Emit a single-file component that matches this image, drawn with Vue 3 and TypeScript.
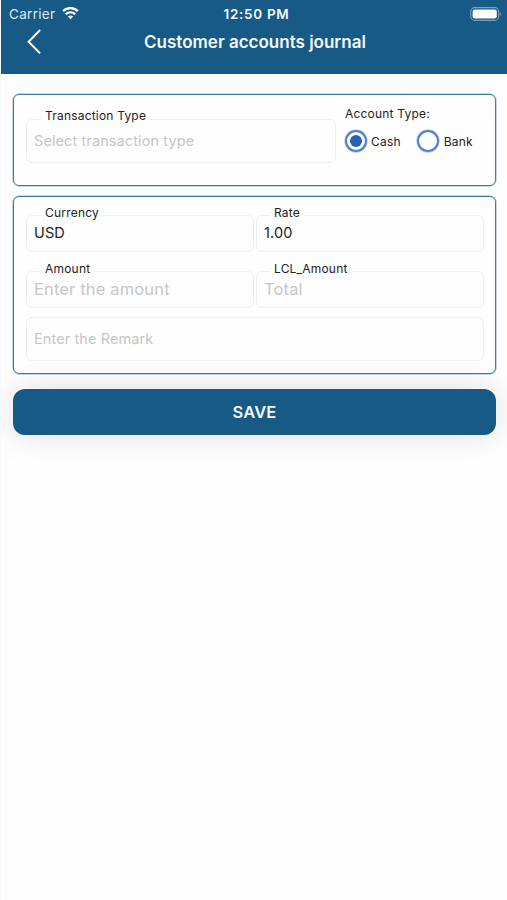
<script setup lang="ts">
import { ref } from 'vue'

type AccountType = 'Cash' | 'Bank'

const accountTypes: AccountType[] = ['Cash', 'Bank']
const accountType = ref<AccountType>('Cash')
const transactionType = ref('')
const currency = ref('USD')
const rate = ref('1.00')
const amount = ref('')
const total = ref('')
const remark = ref('')
</script>

<template>
  <div class="screen">
    <header class="header">
      <div class="status">
        <div class="carrier">
          <span>Carrier</span>
          <svg class="wifi" viewBox="0 0 17 13" width="17" height="13" fill="none" stroke="#fff">
            <path d="M1.1 4.1C5.3.1 11.7.1 15.9 4.1" stroke-width="2.4" />
            <path d="M3.7 7.2C6.5 4.7 10.5 4.7 13.3 7.2" stroke-width="2.2" />
            <path d="M8.5 12.2 5.9 9.5C7.5 8.2 9.5 8.2 11.1 9.5Z" fill="#fff" stroke="none" />
          </svg>
        </div>
        <span class="time">12:50 PM</span>
        <svg class="battery" viewBox="0 0 32 14" width="32" height="14">
          <rect x="0.8" y="0.6" width="27.8" height="12.8" rx="4" fill="none" stroke="#7ba2c0" stroke-width="1.1" />
          <rect x="2.6" y="2.4" width="24.2" height="9.2" rx="2.4" fill="#fff" />
          <path d="M29.9 4.9C31.4 5.6 31.4 8.4 29.9 9.1Z" fill="#7ba2c0" />
        </svg>
      </div>
      <div class="nav">
        <button class="back" type="button" aria-label="Back">
          <svg viewBox="0 0 16 26" width="16" height="26" fill="none" stroke="#fff" stroke-width="2">
            <path d="M14.1 1 2.6 12.7 14.1 24.4" />
          </svg>
        </button>
        <h1 class="title">Customer accounts journal</h1>
      </div>
    </header>

    <main class="form">
      <section class="card type-card">
        <div class="field type-field">
          <label for="type">Transaction Type</label>
          <input id="type" v-model="transactionType" placeholder="Select transaction type" />
        </div>
        <div class="account">
          <div class="account-title">Account Type:</div>
          <div class="options">
            <div v-for="t in accountTypes" :key="t" class="option" @click="accountType = t">
              <span class="radio"><span v-if="accountType === t" class="dot"></span></span>
              <span>{{ t }}</span>
            </div>
          </div>
        </div>
      </section>

      <section class="card amounts-card">
        <div class="row">
          <div class="field">
            <label for="currency">Currency</label>
            <input id="currency" v-model="currency" />
          </div>
          <div class="field">
            <label for="rate">Rate</label>
            <input id="rate" v-model="rate" />
          </div>
        </div>
        <div class="row">
          <div class="field">
            <label for="amount">Amount</label>
            <input id="amount" v-model="amount" class="big" placeholder="Enter the amount" />
          </div>
          <div class="field">
            <label for="total">LCL_Amount</label>
            <input id="total" v-model="total" class="big" placeholder="Total" />
          </div>
        </div>
        <div class="field remark">
          <input v-model="remark" placeholder="Enter the Remark" />
        </div>
      </section>

      <button class="save" type="button">SAVE</button>
    </main>
  </div>
</template>

<style>
body {
  margin: 0;
  background: #fefefe;
}
</style>

<style scoped>
.screen {
  box-sizing: border-box;
  width: 507px;
  height: 900px;
  overflow: hidden;
  border-left: 1px solid #f7f8f9;
  background: #fefefe;
  color: #222;
  font-family: Inter, "Liberation Sans", sans-serif;
}
.header {
  box-sizing: border-box;
  height: 74px;
  margin-left: -1px;
  border-left: 1px solid #8fb0c8;
  background: #185a86;
  color: #f4f9fd;
}
.status {
  display: grid;
  grid-template-columns: 1fr auto 1fr;
  align-items: center;
  height: 27px;
  padding: 0 5px 0 8px;
}
.carrier {
  display: flex;
  align-items: center;
  gap: 7px;
  color: #dbe8f2;
  font-size: 13.5px;
  letter-spacing: 0.3px;
}
.time {
  padding-left: 2px;
  font-size: 13.5px;
  font-weight: 600;
  letter-spacing: 0.7px;
}
.battery {
  justify-self: end;
}
.nav {
  display: grid;
  grid-template-columns: 60px 1fr 58px;
  align-items: center;
  height: 28px;
}
.back {
  display: flex;
  padding: 0 0 0 25px;
  border: 0;
  background: none;
}
.title {
  margin: 0;
  padding-top: 1px;
  font-size: 17px;
  font-weight: 600;
  line-height: 28px;
  text-align: center;
  white-space: nowrap;
}
.form {
  display: flex;
  flex-direction: column;
  padding: 20px 11px 0 12px;
}
.card {
  box-sizing: border-box;
  border: 1px solid #3f7aa4;
  border-radius: 6px;
  box-shadow: 0 0 0 0.5px #8db2cc;
}
.type-card {
  display: flex;
  height: 92px;
  padding: 24px 12px 0;
}
.field {
  position: relative;
  box-sizing: border-box;
  flex: 1;
  height: 37px;
  border: 1px solid #efefef;
  border-radius: 6px;
}
.type-field {
  flex: 0 0 310px;
  height: 44px;
}
.field label {
  position: absolute;
  top: -11px;
  left: 14px;
  padding: 0 4px;
  background: #fefefe;
  font-size: 12px;
  line-height: 15px;
  letter-spacing: 0.2px;
  white-space: nowrap;
}
.type-field label {
  top: -12px;
}
.field + .field label {
  left: 13px;
}
.field input {
  box-sizing: border-box;
  width: 100%;
  height: 100%;
  padding: 0 7px 2px;
  border: 0;
  outline: 0;
  background: none;
  color: #222;
  font-family: inherit;
  font-size: 14.5px;
  letter-spacing: 0.1px;
}
.field input.big {
  padding-bottom: 1px;
  font-size: 16.5px;
  letter-spacing: 0.15px;
}
.field input::placeholder {
  color: #c6c6c8;
  opacity: 1;
}
.account {
  margin: -13px 0 0 9px;
  font-size: 12px;
  letter-spacing: 0.2px;
}
.account-title {
  line-height: 16px;
}
.options {
  display: flex;
  gap: 16px;
  margin-top: 8px;
}
.option {
  display: flex;
  align-items: center;
  gap: 4px;
}
.option + .option {
  gap: 5px;
}
.radio {
  display: flex;
  align-items: center;
  justify-content: center;
  box-sizing: border-box;
  width: 22px;
  height: 22px;
  border: 2px solid #507ccb;
  border-radius: 50%;
  box-shadow: 0 0 0 0.5px #9bb6e2;
}
.dot {
  width: 12px;
  height: 12px;
  border-radius: 50%;
  background: #2b5fb4;
}
.amounts-card {
  display: flex;
  flex-direction: column;
  height: 178px;
  margin-top: 10px;
  padding: 18px 11px 0 12px;
}
.row {
  display: flex;
  gap: 2px;
  margin-bottom: 19px;
}
.row + .remark {
  flex: 0 0 44px;
  margin-top: -10px;
}
.save {
  height: 46px;
  margin-top: 15px;
  padding: 0;
  border: 0;
  border-radius: 12px;
  background: #185a86;
  box-shadow: 0 0 34px rgba(0, 0, 0, 0.13);
  color: #f4f9fd;
  font-family: inherit;
  font-size: 16.5px;
  font-weight: 600;
  letter-spacing: 0.2px;
}
</style>
